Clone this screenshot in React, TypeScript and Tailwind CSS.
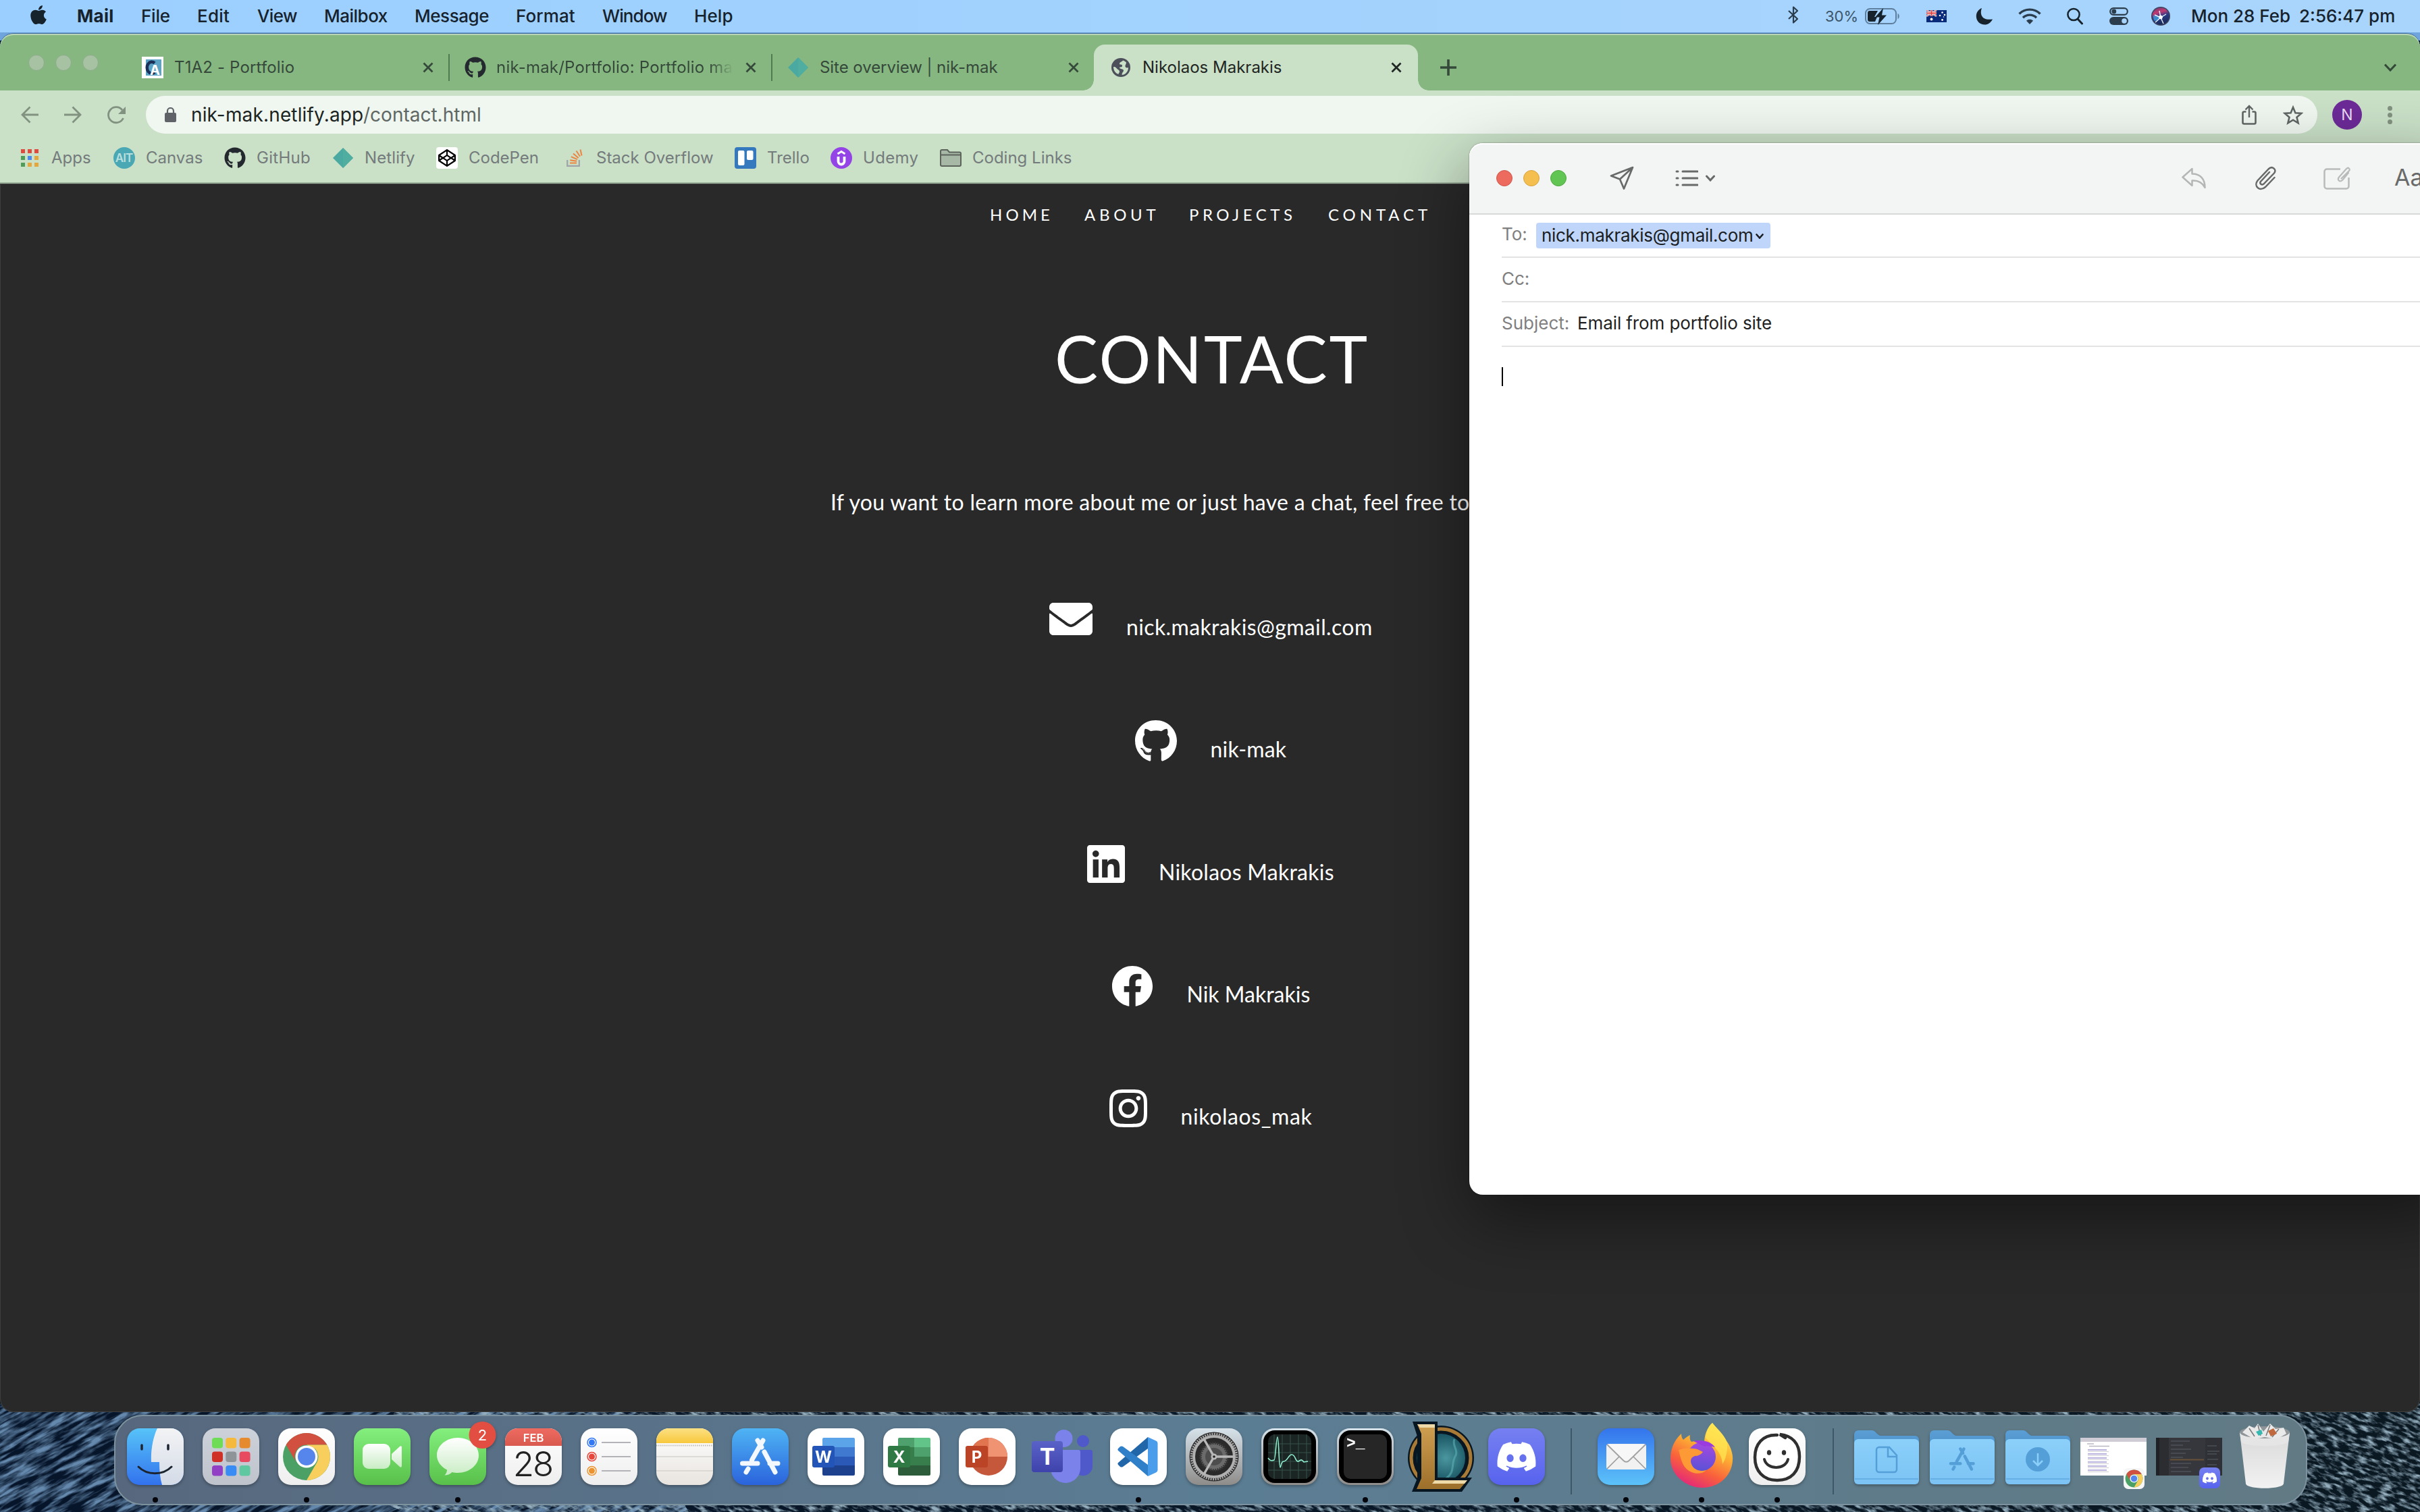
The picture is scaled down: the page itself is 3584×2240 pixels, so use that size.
import type { ReactNode } from "react";
import { FaApple, FaEnvelope, FaGithub, FaLinkedin, FaFacebook, FaInstagram, FaDiscord, FaCodepen } from "react-icons/fa";

/* ---------- Shared ---------- */

function Cross({ className }: { className: string }) {
  return (
    <svg viewBox="0 0 16 16" className={`h-4 w-4 shrink-0 ${className}`}>
      <path d="M1.500 1.500 14.500 14.500M14.500 1.500 1.500 14.500" stroke="currentColor" strokeWidth="2.800" fill="none" />
    </svg>
  );
}

/* ---------- Menu bar ---------- */

const menus = [
  { label: "Mail", cls: "w-[55px] font-bold tracking-[0.3px]" },
  { label: "File", cls: "w-[43px] font-medium tracking-[-0.2px]" },
  { label: "Edit", cls: "w-[49px] font-medium tracking-[0.2px]" },
  { label: "View", cls: "w-[59px] font-medium tracking-[-0.6px]" },
  { label: "Mailbox", cls: "w-[94px] font-medium tracking-[-0.5px]" },
  { label: "Message", cls: "w-[110px] font-medium tracking-[-0.45px]" },
  { label: "Format", cls: "w-[88px] font-medium tracking-[0.1px]" },
  { label: "Window", cls: "w-[96px] font-medium tracking-[-0.9px]" },
  { label: "Help", cls: "w-[58px] font-medium tracking-[0.1px]" },
];

function MenuBar() {
  return (
    <header className="flex h-12 shrink-0 items-center bg-linear-to-r from-[#9bcfff] to-[#a9d5fc] pr-9 pl-[42px] text-[26px] whitespace-nowrap text-[#16222c]">
      <FaApple className="-mt-1 mr-[42px] h-8 w-[30px] shrink-0" />
      <nav className="-mt-px flex gap-10">
        {menus.map((m) => (
          <span key={m.label} className={m.cls}>{m.label}</span>
        ))}
      </nav>
      <div className="ml-auto flex items-center text-[#2b3d4c]">
        <svg viewBox="0 0 18 28" className="-mt-1 h-7 w-[18px]">
          <path d="M2 8 15 20 9 25.500V2.500L15 8 2 20" fill="none" stroke="currentColor" strokeWidth="2.200" strokeLinejoin="round" />
        </svg>
        <span className="ml-[38px] w-[50px] text-[22px] text-[#3c5468]">30%</span>
        <svg viewBox="0 0 52 26" className="ml-[9px] h-[26px] w-[52px]">
          <rect x="1" y="2" width="45" height="22" rx="6.500" fill="none" stroke="#5d7f9d" strokeWidth="2" />
          <path d="M48.500 9v8c3-1 3-7 0-8z" fill="#5d7f9d" />
          <path d="M7 5h12l-5 9h4l-3 7H7a3 3 0 0 1-3-3V8a3 3 0 0 1 3-3z" fill="#16222c" />
          <path d="M27 1 15 14.500h6.500L19 26 32 11.500h-7z" fill="#16222c" />
        </svg>
        <svg viewBox="0 0 30 18" className="ml-[39px] h-[18px] w-[30px]">
          <rect width="30" height="18" fill="#0a2a7a" />
          <path d="M0 0 15 9M15 0 0 9" stroke="#fff" strokeWidth="2.400" />
          <path d="M0 0 15 9M15 0 0 9" stroke="#e0433f" strokeWidth="1" />
          <path d="M7.500 0v9M0 4.500h15" stroke="#fff" strokeWidth="3.400" />
          <path d="M7.500 0v9M0 4.500h15" stroke="#e0433f" strokeWidth="2" />
          <g fill="#fff">
            <circle cx="7.500" cy="13.500" r="1.900" />
            <circle cx="23.500" cy="3.500" r="1.300" />
            <circle cx="20" cy="8" r="1.300" />
            <circle cx="27" cy="7" r="1.300" />
            <circle cx="23.500" cy="14.500" r="1.400" />
            <circle cx="25.500" cy="10" r=".8" />
          </g>
        </svg>
        <svg viewBox="0 0 26 26" className="ml-[43px] h-[26px] w-[26px] text-[#16222c]">
          <path d="M9 1C6 9 8 20 25 17.500 22 23 18 25.500 13.500 25.500 6 25.500.8 20 .8 13 .8 7.500 4 3 9 1z" fill="currentColor" />
        </svg>
        <svg viewBox="0 0 34 26" className="ml-[37px] h-[26px] w-[34px]">
          <g fill="none" stroke="currentColor" strokeWidth="3.400">
            <path d="M1.500 9.500c8.500-8.500 22.500-8.500 31 0" />
            <path d="M7 15.200c5.500-5.500 14.500-5.500 20 0" />
          </g>
          <path d="M12 19.800c2.800-2.600 7.200-2.600 10 0L17 25z" fill="currentColor" />
        </svg>
        <svg viewBox="0 0 24 26" className="ml-[38px] h-[26px] w-6 text-[#16222c]">
          <circle cx="10" cy="10.500" r="8.600" fill="none" stroke="currentColor" strokeWidth="2.500" />
          <path d="m16 17 6.500 7" stroke="currentColor" strokeWidth="3" strokeLinecap="round" />
        </svg>
        <svg viewBox="0 0 28 28" className="ml-[39px] h-7 w-7">
          <rect x="1.200" y="2.200" width="25.600" height="9.600" rx="4.800" fill="none" stroke="currentColor" strokeWidth="2.200" />
          <circle cx="6.800" cy="7" r="3.400" fill="currentColor" />
          <rect y="15" width="28" height="12" rx="6" fill="currentColor" />
          <circle cx="22" cy="21" r="3.800" fill="#a8d4fc" />
        </svg>
        <svg viewBox="0 0 28 28" className="ml-[34px] h-7 w-7">
          <defs>
            <linearGradient id="siri" x1="0" y1="0" x2=".3" y2="1">
              <stop offset="0" stopColor="#6b3a70" />
              <stop offset=".35" stopColor="#c23a72" />
              <stop offset=".6" stopColor="#2c3a86" />
              <stop offset="1" stopColor="#1b2c5c" />
            </linearGradient>
          </defs>
          <circle cx="14" cy="14" r="14" fill="#3d4560" />
          <circle cx="14" cy="14" r="12.500" fill="url(#siri)" />
          <path d="M3 13c5 0 8 1 11 3-2 2-6 5-9 5-2-2-2-5-2-8z" fill="#3f9fe0" opacity=".8" />
          <path d="M14 16 6 23M14 16 12 6M14 16l8-5M14 16l4 9M14 16 5 12" stroke="#e8f6ff" strokeWidth="1.400" />
          <circle cx="14" cy="15.500" r="2.800" fill="#fff" />
        </svg>
        <span className="-mt-px ml-[31px] w-[147px] font-medium text-[#16222c]">Mon 28 Feb</span>
        <span className="-mt-px ml-[13px] w-[143px] font-medium text-[#16222c]">2:56:47 pm</span>
      </div>
    </header>
  );
}

/* ---------- Browser ---------- */

function Diamond() {
  return (
    <svg viewBox="0 0 30 30" className="h-[30px] w-[30px] shrink-0">
      <path d="M15 0 30 15 15 30 0 15z" fill="#4aa9a0" />
      <path d="M15 0 30 15 15 30z" fill="#4fae9f" />
    </svg>
  );
}

function TabStrip() {
  return (
    <div className="flex h-[84px] items-stretch rounded-t-[20px] bg-[#87b781] pt-4 text-2xl whitespace-nowrap text-[#35493a] shadow-[inset_0_2px_0_#b9d6b6]">
      <div className="flex w-[192px] items-center gap-4 pb-3.5 pl-[42px]">
        <i className="h-6 w-6 rounded-full border border-[#8cab89] bg-[#a6c2a3]" />
        <i className="h-6 w-6 rounded-full border border-[#8cab89] bg-[#a6c2a3]" />
        <i className="h-6 w-6 rounded-full border border-[#8cab89] bg-[#a6c2a3]" />
      </div>
      <div className="flex w-[472px] items-center pr-[22px] pl-[18px]">
        <svg viewBox="0 0 32 32" className="h-8 w-8 shrink-0">
          <rect width="32" height="32" fill="#fff" />
          <rect x="6" y="4" width="23" height="24" fill="#5ba3c4" />
          <path d="M19 9.500A7 8.500 0 1 0 19 23" fill="none" stroke="#1c2f57" strokeWidth="4.500" />
          <text x="12" y="27" fontSize="20" fontWeight="700" fill="#fff" fontFamily="Inter">A</text>
        </svg>
        <span className="ml-4 tracking-[0.15px]">T1A2 - Portfolio</span>
        <Cross className="ml-auto" />
      </div>
      <i className="my-auto h-10 w-0.5 bg-[#527a50]" />
      <div className="flex w-[476px] items-center pr-[22px] pl-[22px]">
        <FaGithub className="h-8 w-8 shrink-0 text-[#24292f]" />
        <span className="ml-[15px] w-[351px] overflow-hidden mask-r-from-90% tracking-[0.2px]">nik-mak/Portfolio: Portfolio made</span>
        <Cross className="ml-auto" />
      </div>
      <i className="my-auto h-10 w-0.5 bg-[#527a50]" />
      <div className="flex w-[476px] items-center pr-[22px] pl-[23px]">
        <Diamond />
        <span className="ml-[17px] tracking-[-0.05px]">Site overview | nik-mak</span>
        <Cross className="ml-auto" />
      </div>
      <div className="relative flex w-[480px] items-center rounded-t-2xl bg-[#cae0c7] pr-6 pl-[26px] text-[#1f2623]">
        <i className="absolute bottom-0 -left-4 h-4 w-4 bg-[radial-gradient(circle_at_0_0,transparent_15.5px,#cae0c7_16px)]" />
        <i className="absolute -right-4 bottom-0 h-4 w-4 bg-[radial-gradient(circle_at_100%_0,transparent_15.5px,#cae0c7_16px)]" />
        <svg viewBox="0 0 28 28" className="h-7 w-7 shrink-0">
          <circle cx="14" cy="14" r="14" fill="#4d4f5a" />
          <path d="M17 3.500c-1 2-5 2-5 5 0 2 4 0 4 3s-4 1-4 3c0 2 6 1 6 4 0 2-2 2-2.500 6.500C21 24.500 25 20 25 14c-2 1-4 .5-4.500-1.500S22 9 22 6.500c-1.500-1.500-3-2.500-5-3zM3 13c3-.5 4 1.500 5.500 3s3.500 2 3.500 4-1.500 2-1.500 4C6 22.500 3 18.500 3 13z" fill="#cae0c7" />
        </svg>
        <span className="ml-[18px]">Nikolaos Makrakis</span>
        <Cross className="ml-auto" />
      </div>
      <svg viewBox="0 0 26 26" className="my-auto ml-8 h-[26px] w-[26px]">
        <path d="M13 1v24M1 13h24" stroke="#35493a" strokeWidth="3.600" />
      </svg>
      <svg viewBox="0 0 18 12" className="my-auto mr-[35px] ml-auto h-3 w-[18px]">
        <path d="m1 1.500 8 8.500 8-8.500" fill="none" stroke="#35493a" strokeWidth="3" />
      </svg>
    </div>
  );
}

function Toolbar() {
  return (
    <div className="flex h-[72px] items-center pl-[31px] whitespace-nowrap">
      <svg viewBox="0 0 26 26" className="h-[26px] w-[26px] text-[#829280]">
        <path d="M13.500 1.500 2 13l11.500 11.500M2 13h24" fill="none" stroke="currentColor" strokeWidth="2.800" />
      </svg>
      <svg viewBox="0 0 26 26" className="ml-[38px] h-[26px] w-[26px] text-[#829280]">
        <path d="M12.500 1.500 24 13 12.500 24.500M24 13H0" fill="none" stroke="currentColor" strokeWidth="2.800" />
      </svg>
      <svg viewBox="0 0 27 27" className="ml-[38px] h-[27px] w-[27px] text-[#829280]">
        <path d="M23.500 18A11.500 11.500 0 1 1 22 6" fill="none" stroke="currentColor" strokeWidth="2.800" />
        <path d="M27 1v11H16z" fill="currentColor" />
      </svg>
      <div className="ml-[30px] flex h-14 w-[3216px] items-center rounded-full bg-[#f0f7f0] pr-[21px] pl-7 text-[28px] text-[#5f6764]">
        <svg viewBox="0 0 17 22" className="h-[22px] w-[17px]">
          <rect y="8" width="17" height="14" rx="2" fill="#5f6368" />
          <path d="M4 9V5.500a4.500 4.500 0 0 1 9 0V9" fill="none" stroke="#5f6368" strokeWidth="2.200" />
        </svg>
        <span className="ml-[22px] w-[255px] tracking-[0.15px] text-[#1c2422]">nik-mak.netlify.app</span>
        <span>/contact.html</span>
        <svg viewBox="0 0 22 30" className="ml-auto h-[30px] w-[22px]">
          <path d="M6.500 10.500H3.500a2 2 0 0 0-2 2v14a2 2 0 0 0 2 2h15a2 2 0 0 0 2-2v-14a2 2 0 0 0-2-2h-3" fill="none" stroke="currentColor" strokeWidth="2.600" />
          <path d="M11 19V3M5.500 7.500 11 2l5.500 5.500" fill="none" stroke="currentColor" strokeWidth="2.400" />
        </svg>
        <svg viewBox="0 0 30 29" className="ml-[39px] h-[29px] w-[30px]">
          <path d="m15 3 3.400 8.200 8.900.7-6.800 5.800 2.100 8.600L15 21.700l-7.600 4.600 2.100-8.600-6.800-5.800 8.900-.7z" fill="none" stroke="currentColor" strokeWidth="2.600" />
        </svg>
      </div>
      <span className="ml-[22px] grid h-11 w-11 place-items-center rounded-full bg-[#6c2a97] text-[23px] text-[#e9dcf2]">N</span>
      <div className="ml-[38px] flex flex-col gap-[3px]">
        <i className="h-[7px] w-[7px] rounded-full bg-[#829280]" />
        <i className="h-[7px] w-[7px] rounded-full bg-[#829280]" />
        <i className="h-[7px] w-[7px] rounded-full bg-[#829280]" />
      </div>
    </div>
  );
}

const appColors = ["#e24a3f", "#e24a3f", "#e24a3f", "#4f9d58", "#4a8af0", "#e5a63c", "#4f9d58", "#e5a63c", "#e5a63c"];

const bookmarks: { label: string; cls: string; icon: ReactNode }[] = [
  {
    label: "Apps",
    cls: "w-[62px]",
    icon: (
      <div className="grid grid-cols-3 gap-1">
        {appColors.map((c, i) => (
          <i key={i} className="h-[6px] w-[6px]" style={{ background: c }} />
        ))}
      </div>
    ),
  },
  {
    label: "Canvas",
    cls: "w-[86px]",
    icon: (
      <svg viewBox="0 0 32 32" className="h-8 w-8">
        <circle cx="16" cy="16" r="16" fill="#4aa7b4" />
        <text x="15.500" y="22" fontSize="17" fontWeight="600" textAnchor="middle" fill="#b9dfdf" fontFamily="Inter" letterSpacing="-1">AIT</text>
      </svg>
    ),
  },
  { label: "GitHub", cls: "w-[82px] tracking-[0.3px]", icon: <FaGithub className="h-8 w-8 text-[#24292f]" /> },
  { label: "Netlify", cls: "w-[76px] tracking-[0.1px]", icon: <Diamond /> },
  {
    label: "CodePen",
    cls: "w-[108px]",
    icon: (
      <span className="grid h-8 w-8 place-items-center rounded-sm bg-white">
        <FaCodepen className="h-[26px] w-[26px] text-black" />
      </span>
    ),
  },
  {
    label: "Stack Overflow",
    cls: "w-[175px]",
    icon: (
      <svg viewBox="0 0 24 26" className="h-[26px] w-6">
        <path d="M1.200 16v8.800h17.600V16" fill="none" stroke="#a0a3a8" strokeWidth="2.200" />
        <path d="M5 20.500h10M5.300 16.200l9.900 1.600M6.800 11.200l9.200 4M10 6.500l7.600 6.500M14.500 2.500l5.500 8.300M20.500.500l2 9" stroke="#ee8340" strokeWidth="2" />
      </svg>
    ),
  },
  {
    label: "Trello",
    cls: "w-[64px]",
    icon: (
      <svg viewBox="0 0 32 32" className="h-8 w-8">
        <rect width="32" height="32" rx="4" fill="#3478bd" />
        <rect x="5" y="5" width="9.500" height="22" rx="2" fill="#fff" />
        <rect x="18" y="5" width="9.500" height="14" rx="2" fill="#fff" />
      </svg>
    ),
  },
  {
    label: "Udemy",
    cls: "w-[84px] tracking-[0.3px]",
    icon: (
      <svg viewBox="0 0 32 32" className="h-8 w-8">
        <circle cx="16" cy="16" r="16" fill="#9343e6" />
        <path d="M11.500 14v7a4.500 4.500 0 0 0 9 0V14" fill="none" stroke="#fff" strokeWidth="3.800" />
        <path d="m10.500 10 5.500-3.500 5.500 3.500" fill="none" stroke="#fff" strokeWidth="2.800" />
      </svg>
    ),
  },
  {
    label: "Coding Links",
    cls: "w-[150px]",
    icon: (
      <svg viewBox="0 0 32 26" className="h-[26px] w-8">
        <path d="M1 23V3a2 2 0 0 1 2-2h8l3 3.500h15a2 2 0 0 1 2 2V23a2 2 0 0 1-2 2H3a2 2 0 0 1-2-2z" fill="#a8b8a7" stroke="#5b635b" strokeWidth="2" />
        <path d="M1 8.500h30" stroke="#5b635b" strokeWidth="2" />
      </svg>
    ),
  },
];

function Bookmarks() {
  return (
    <div className="flex h-[66px] gap-[30px] border-b-2 border-[#9db29b] pb-2 pl-7 text-2xl whitespace-nowrap text-[#747b7c]">
      {bookmarks.map((b) => (
        <div key={b.label} className="flex items-center">
          <span className={`mr-4 flex w-8 justify-center ${b.label === "Stack Overflow" ? "ml-[3px]" : ""}`}>{b.icon}</span>
          <span className={b.cls}>{b.label}</span>
        </div>
      ))}
    </div>
  );
}

const contacts = [
  { Icon: FaEnvelope, size: "w-16", label: "nick.makrakis@gmail.com", cls: "w-[362px] tracking-[0.37px]" },
  { Icon: FaGithub, size: "w-[62px]", label: "nik-mak", cls: "w-[111px] tracking-[0.2px]" },
  { Icon: FaLinkedin, size: "w-14", label: "Nikolaos Makrakis", cls: "w-[258px] tracking-[0.25px]" },
  { Icon: FaFacebook, size: "w-[62px]", label: "Nik Makrakis", cls: "w-[181px]" },
  { Icon: FaInstagram, size: "w-14", label: "nikolaos_mak", cls: "w-[193px] tracking-[0.6px]" },
];

function ContactPage() {
  return (
    <main className="flex h-[1820px] flex-col rounded-b-[20px] bg-[#292929] font-[Lato,sans-serif] whitespace-nowrap text-white shadow-[inset_0_0_0_1px_#3f3f3f]">
      <nav className="flex h-[92px] items-center pl-[1466px] text-2xl">
        <span className="w-[94px] tracking-[5.1px]">HOME</span>
        <span className="ml-[46px] w-[110px] tracking-[5.7px]">ABOUT</span>
        <span className="ml-[45px] w-[157px] tracking-[5.5px]">PROJECTS</span>
        <span className="ml-[49px] w-[150px] tracking-[5.9px]">CONTACT</span>
      </nav>
      <h1 className="mx-auto mt-[107px] h-[120px] w-[464px] pl-0.5 text-[96px] leading-[120px] tracking-[2.7px]">CONTACT</h1>
      <p className="mx-auto mt-[129px] h-12 w-[1124px] text-[32px] leading-[48px] tracking-[0.3px]">
        If you want to learn more about me or just have a chat, feel free to
      </p>
      <ul className="mt-[117px] flex flex-col gap-[117.25px] text-[32px] leading-10">
        {contacts.map(({ Icon, size, label, cls }) => (
          <li key={label} className="flex h-16 items-end justify-center gap-[50px]">
            <Icon className={`h-16 ${size}`} />
            <span className={cls}>{label}</span>
          </li>
        ))}
      </ul>
    </main>
  );
}

/* ---------- Mail compose window ---------- */

function MailWindow() {
  return (
    <section className="absolute top-[212px] left-[2176px] flex h-[1558px] w-[1460px] flex-col rounded-[20px] bg-white text-[26px] whitespace-nowrap text-[#7f7f7f] shadow-[0_0_2px_rgba(0,0,0,0.5),0_36px_100px_rgba(0,0,0,0.45)]">
      <div className="flex h-[106px] items-center rounded-t-[20px] border-b-2 border-[#d7d9d8] bg-[#f3f5f4] pl-10 text-[#686a69] shadow-[inset_0_2px_0_#fff]">
        <i className="h-6 w-6 rounded-full border border-[#d0564b] bg-[#ed6a5e]" />
        <i className="ml-4 h-6 w-6 rounded-full border border-[#d8a23f] bg-[#f5bf4f]" />
        <i className="ml-4 h-6 w-6 rounded-full border border-[#4fa73e] bg-[#61c554]" />
        <svg viewBox="0 0 36 36" className="ml-16 h-9 w-9">
          <path d="M34 2 2 14.500 15 19.500 21 33.500zM34 2 15 19.500" fill="none" stroke="currentColor" strokeWidth="2.700" strokeLinejoin="round" />
        </svg>
        <svg viewBox="0 0 34 26" className="ml-[61px] h-[26px] w-[34px]">
          <path d="M11 3h22M11 13h22M11 23h22M2 3h2M2 13h2M2 23h2" stroke="currentColor" strokeWidth="3" strokeLinecap="round" />
        </svg>
        <svg viewBox="0 0 14 10" className="ml-[11px] h-2.5 w-3.5">
          <path d="m1.500 2 5.500 6 5.500-6" fill="none" stroke="currentColor" strokeWidth="3" strokeLinecap="round" />
        </svg>
        <svg viewBox="0 0 36 32" className="ml-[691px] h-8 w-9 text-[#b4b6b5]">
          <path d="M15.500 2 1.500 14.500 15.500 27v-7.500c9-.5 15 2.500 19 10.500 0-13-7-20.500-19-20.500z" fill="none" stroke="currentColor" strokeWidth="2.500" strokeLinejoin="round" />
        </svg>
        <svg viewBox="0 0 32 36" className="ml-[72px] h-9 w-8">
          <path d="M29.500 17 16 31c-8 7.500-18-1-11.500-9.500L20.500 4.500c5.500-5.500 13 .5 8.500 6L13.500 26.500c-3 2.500-6.500-.5-4.500-3.500L22 9" fill="none" stroke="currentColor" strokeWidth="2.500" strokeLinecap="round" />
        </svg>
        <svg viewBox="0 0 40 34" className="ml-[70px] h-[34px] w-10 text-[#b9bbba]">
          <path d="M25 3.500H5a3.500 3.500 0 0 0-3.500 3.500v22A3.500 3.500 0 0 0 5 32.500h29a3.500 3.500 0 0 0 3.500-3.500V16" fill="none" stroke="currentColor" strokeWidth="2.500" />
          <path d="M37 9 28 20c-4 3.500-8-.5-5-4.500L34 3c3-3 6 .5 4 3L26.500 17.500" fill="none" stroke="currentColor" strokeWidth="2.200" strokeLinecap="round" />
        </svg>
        <span className="-mt-1 ml-[65px] text-[34px]">Aa</span>
      </div>
      <div className="ml-12 flex h-16 items-center border-b-2 border-[#e3e3e3]">
        <span className="-mt-1.5 w-[38px]">To:</span>
        <span className="ml-[13px] flex h-[38px] w-[347px] items-center rounded bg-[#bfd6fa] pb-0.5 pl-2 text-[#1a1d22]">
          <span className="w-[313px] tracking-[-0.3px]">nick.makrakis@gmail.com</span>
          <svg viewBox="0 0 12 8" className="mt-1 ml-1 h-2 w-3">
            <path d="m1.500 1.500 4.500 5 4.500-5" fill="none" stroke="currentColor" strokeWidth="2.600" strokeLinecap="round" />
          </svg>
        </span>
      </div>
      <div className="ml-12 flex h-[66px] items-center border-b-2 border-[#e3e3e3] pb-1">
        <span>Cc:</span>
      </div>
      <div className="ml-12 flex h-[66px] items-center border-b-2 border-[#e3e3e3] pb-1">
        <span className="w-[102px]">Subject:</span>
        <span className="ml-[10px] tracking-[-0.1px] text-[#1f1f1f]">Email from portfolio site</span>
      </div>
      <i className="mt-[30px] ml-12 h-7 w-0.5 bg-black" />
    </section>
  );
}

/* ---------- Dock ---------- */

function Tile({ fill, children }: { fill: string; children?: ReactNode }) {
  return (
    <svg viewBox="0 0 84 84" className="h-[84px] w-[84px] overflow-visible drop-shadow-[0_2px_2px_rgba(0,0,0,0.3)]">
      <rect width="84" height="84" rx="19" fill={fill} />
      {children}
    </svg>
  );
}

function Grad({ id, from, to }: { id: string; from: string; to: string }) {
  return (
    <linearGradient id={id} x1="0" y1="0" x2="0" y2="1">
      <stop offset="0" stopColor={from} />
      <stop offset="1" stopColor={to} />
    </linearGradient>
  );
}

function DockDefs() {
  return (
    <svg className="absolute h-0 w-0">
      <defs>
        <Grad id="finder" from="#57c3f8" to="#3272ee" />
        <Grad id="finderFace" from="#f3f3f5" to="#d3dbe7" />
        <Grad id="launch" from="#cdd2da" to="#bfc3cb" />
        <Grad id="white" from="#ffffff" to="#eeeeee" />
        <Grad id="green" from="#84ef7e" to="#58c04a" />
        <Grad id="bubble" from="#ffffff" to="#c9ecc4" />
        <Grad id="calTop" from="#ee6a60" to="#d95a50" />
        <Grad id="noteTop" from="#fbe083" to="#f8c83c" />
        <Grad id="notes" from="#ffffff" to="#e8e4df" />
        <Grad id="store" from="#4fb4f4" to="#2a63dc" />
        <Grad id="metal" from="#d6e2ea" to="#8e8c8a" />
        <Grad id="discord" from="#7680f1" to="#5763ee" />
        <Grad id="mail" from="#3474ec" to="#5cc3f9" />
        <Grad id="folder" from="#8bd0fa" to="#7cc3f4" />
        <Grad id="folderBack" from="#5a9ed4" to="#3f82c4" />
        <Grad id="teams" from="#5a62c8" to="#3e43ab" />
        <Grad id="gold" from="#d0a052" to="#9c6f2a" />
        <Grad id="trash" from="#d9d9d9" to="#f2f2f2" />
        <linearGradient id="fire" x1=".8" y1="0" x2=".3" y2="1">
          <stop offset="0" stopColor="#fff05a" />
          <stop offset=".4" stopColor="#fdae33" />
          <stop offset=".7" stopColor="#f9603c" />
          <stop offset="1" stopColor="#e3267c" />
        </linearGradient>
        <linearGradient id="globe" x1=".5" y1="0" x2=".4" y2="1">
          <stop offset="0" stopColor="#a548e0" />
          <stop offset="1" stopColor="#5a52d6" />
        </linearGradient>
        <radialGradient id="portal" cx=".6" cy=".5" r=".6">
          <stop offset="0" stopColor="#4a97a0" />
          <stop offset="1" stopColor="#0f4656" />
        </radialGradient>
      </defs>
    </svg>
  );
}

function ChromeMark() {
  return (
    <g>
      <circle cx="42" cy="42" r="35" fill="#4aa065" />
      <path d="M42 7a35 35 0 0 1 30.300 17.500H42a17.500 17.500 0 0 0-15.200 26.200L11.700 24.500A35 35 0 0 1 42 7z" fill="#d2503f" />
      <path d="M72.300 24.500A35 35 0 0 1 42 77l15.200-26.200a17.500 17.500 0 0 0-2-20L42 24.500z" fill="#f8cf5c" />
      <circle cx="42" cy="42" r="16.500" fill="#fff" />
      <circle cx="42" cy="42" r="13" fill="#5686ec" />
    </g>
  );
}

function AppStoreMark({ color, w }: { color: string; w: number }) {
  return (
    <g stroke={color} strokeWidth={w} strokeLinecap="round">
      <path d="M46 18 29.500 47M38 18l6 10M48 35l16 30M15.500 52H38M56 52h12M24 60l-3 5" />
    </g>
  );
}

const launchColors = ["#6fdc58", "#f5b93d", "#e68a2e", "#cf3127", "#8e9498", "#e84a60", "#9240c4", "#3a8cf5", "#5fc8a0"];

function OfficeLetter({ letter, fill }: { letter: string; fill: string }) {
  return (
    <g>
      <rect x="7" y="26" width="33" height="32" rx="3" fill={fill} />
      <text x="23.500" y="51" fontSize="24" fontWeight="700" textAnchor="middle" fill="#fff" fontFamily="Inter">{letter}</text>
    </g>
  );
}

const apps: { name: string; running?: boolean; icon: ReactNode }[] = [
  {
    name: "finder",
    running: true,
    icon: (
      <Tile fill="url(#finder)">
        <path d="M45 0h20a19 19 0 0 1 19 19v46a19 19 0 0 1-19 19H52c-3-10-4-22-4-34H36C35 32 39 12 45 0z" fill="url(#finderFace)" />
        <path d="M22 25v6M61 25v6" stroke="#1c2430" strokeWidth="3.500" strokeLinecap="round" />
        <path d="M17 57c13 13 36 13 49 0" fill="none" stroke="#1c2430" strokeWidth="3" strokeLinecap="round" />
      </Tile>
    ),
  },
  {
    name: "launchpad",
    icon: (
      <Tile fill="url(#launch)">
        {launchColors.map((c, i) => (
          <rect key={c} x={14 + (i % 3) * 20.3} y={14 + Math.floor(i / 3) * 20.5} width="16" height="15.500" rx="4" fill={c} />
        ))}
      </Tile>
    ),
  },
  { name: "chrome", running: true, icon: <Tile fill="url(#white)"><ChromeMark /></Tile> },
  {
    name: "facetime",
    icon: (
      <Tile fill="url(#green)">
        <rect x="13" y="23" width="41" height="37" rx="9" fill="url(#bubble)" />
        <path d="M56 38l12-11c1.500-1.300 3-.5 3 1.500v27c0 2-1.500 2.800-3 1.500L56 46z" fill="url(#bubble)" />
      </Tile>
    ),
  },
  {
    name: "messages",
    running: true,
    icon: (
      <Tile fill="url(#green)">
        <path d="M42 14c17 0 31 11.500 31 26S59 66 42 66c-3 0-6-.3-8.500-1-3 3-7 4.500-11 4.500 2-2 3.500-5 3.500-8C17 57 11 49 11 40c0-14.500 14-26 31-26z" fill="url(#bubble)" />
        <circle cx="78.500" cy="10" r="20" fill="#e24f42" />
        <text x="78.500" y="18" fontSize="22" textAnchor="middle" fill="#fff" fontFamily="Inter">2</text>
      </Tile>
    ),
  },
  {
    name: "calendar",
    icon: (
      <Tile fill="url(#white)">
        <path d="M0 26v-7A19 19 0 0 1 19 0h46a19 19 0 0 1 19 19v7z" fill="url(#calTop)" />
        <text x="42" y="20" fontSize="16.500" fontWeight="600" textAnchor="middle" fill="#fff" fontFamily="Inter">FEB</text>
        <text x="41" y="71" fontSize="51" fontWeight="300" textAnchor="middle" fill="#222" fontFamily="Inter" letterSpacing="-2">28</text>
      </Tile>
    ),
  },
  {
    name: "reminders",
    icon: (
      <Tile fill="url(#white)">
        {["#3478f6", "#e8463a", "#ec9330"].map((c, i) => (
          <g key={c}>
            <circle cx="16.500" cy={21 + i * 21} r="6.500" fill="#fff" stroke={c} strokeWidth="1.500" />
            <circle cx="16.500" cy={21 + i * 21} r="4.500" fill={c} />
            <path d={`M31 ${21 + i * 21}h43`} stroke="#b4b4b8" strokeWidth="2" />
          </g>
        ))}
      </Tile>
    ),
  },
  {
    name: "notes",
    icon: (
      <Tile fill="url(#notes)">
        <path d="M0 22v-3A19 19 0 0 1 19 0h46a19 19 0 0 1 19 19v3z" fill="url(#noteTop)" />
        <path d="M0 25.500h84" stroke="#bfbbb2" strokeWidth="2" strokeDasharray="1.500 1.500" />
        <path d="M0 42h84M0 63h84" stroke="#d6d4d0" strokeWidth="1.600" />
      </Tile>
    ),
  },
  { name: "appstore", icon: <Tile fill="url(#store)"><AppStoreMark color="#f3f8ff" w={7} /></Tile> },
  {
    name: "word",
    icon: (
      <Tile fill="#fff">
        <path d="M22 28V16a2 2 0 0 1 2-2h44a2 2 0 0 1 2 2v12z" fill="#5ba4ea" />
        <path d="M22 28h48v14H22z" fill="#3f79d0" />
        <path d="M22 42h48v13H22z" fill="#2a59b8" />
        <path d="M22 55h48v13a2 2 0 0 1-2 2H24a2 2 0 0 1-2-2z" fill="#1d418c" />
        <OfficeLetter letter="W" fill="#2355b8" />
      </Tile>
    ),
  },
  {
    name: "excel",
    icon: (
      <Tile fill="#fff">
        <path d="M22 28V16a2 2 0 0 1 2-2h22v14z" fill="#4ea06c" />
        <path d="M46 14h22a2 2 0 0 1 2 2v12H46z" fill="#63c48a" />
        <path d="M22 28h24v14H22z" fill="#387d4c" />
        <path d="M46 28h24v14H46z" fill="#4ea06c" />
        <path d="M22 42h48v13H22z" fill="#387d4c" />
        <path d="M22 55h48v13a2 2 0 0 1-2 2H24a2 2 0 0 1-2-2z" fill="#2c5c3a" />
        <OfficeLetter letter="X" fill="#2f7a44" />
      </Tile>
    ),
  },
  {
    name: "powerpoint",
    icon: (
      <Tile fill="#fff">
        <circle cx="44" cy="42" r="28" fill="#c5583a" />
        <path d="M44 42V14a28 28 0 0 0-28 28z" fill="#e07550" />
        <path d="M44 42V14a28 28 0 0 1 28 28z" fill="#f09373" />
        <g transform="translate(3 0)"><OfficeLetter letter="P" fill="#bb4427" /></g>
      </Tile>
    ),
  },
  {
    name: "teams",
    icon: (
      <svg viewBox="0 0 84 84" className="h-[84px] w-[84px] overflow-visible">
        <circle cx="72" cy="19" r="9" fill="#5059c9" />
        <path d="M62 32h21a3 3 0 0 1 3 3v21a14 14 0 0 1-20 13z" fill="#5059c9" />
        <circle cx="43.500" cy="15" r="13" fill="#7b83eb" />
        <path d="M24 32h41a3 3 0 0 1 3 3v24a22 22 0 0 1-44 0z" fill="#7b83eb" />
        <rect x="-4" y="19" width="46" height="46" rx="4" fill="url(#teams)" />
        <text x="19" y="54" fontSize="34" fontWeight="700" textAnchor="middle" fill="#fff" fontFamily="Inter">T</text>
      </svg>
    ),
  },
  {
    name: "vscode",
    running: true,
    icon: (
      <Tile fill="#fff">
        <path d="M12 51 56 13v17L19 57q-2 1-4 0l-3-3q-1.500-1.500 0-3z" fill="#2166a8" />
        <path d="M12 33 56 71V54L19 27q-2-1-4 0l-3 3q-1.500 1.500 0 3z" fill="#2f7fc9" />
        <path d="M56 13l12 5.500a4 4 0 0 1 2.500 3.500v40a4 4 0 0 1-2.500 3.500L56 71z" fill="#4a9deb" />
      </Tile>
    ),
  },
  {
    name: "settings",
    icon: (
      <Tile fill="url(#metal)">
        <circle cx="42" cy="42" r="36.500" fill="#2a2a2a" />
        <circle cx="42" cy="42" r="30" fill="none" stroke="#b0b0b0" strokeWidth="4" />
        <circle cx="42" cy="42" r="33.500" fill="none" stroke="#a8a8a8" strokeWidth="3.500" strokeDasharray="2 1.500" />
        <circle cx="42" cy="42" r="20" fill="#6b6b6b" stroke="#3a3a3a" strokeWidth="4" strokeDasharray="2 1.500" />
        <circle cx="42" cy="42" r="13" fill="#4d4d4d" />
        <path d="M42 42h30M42 42 27 16M42 42 27 68" stroke="#b9b9b9" strokeWidth="3.500" />
        <circle cx="42" cy="42" r="4.500" fill="#b9b9b9" />
        <circle cx="42" cy="42" r="1.800" fill="#222" />
      </Tile>
    ),
  },
  {
    name: "activity",
    icon: (
      <Tile fill="url(#metal)">
        <rect x="3" y="3" width="78" height="78" rx="17" fill="#000" />
        <rect x="10" y="9" width="64" height="66" rx="10" fill="#1b2523" />
        <path d="M10 23h64M10 36h64M10 49h64M10 62h64M19 9v66M31 9v66M43 9v66M55 9v66M67 9v66" stroke="#36524b" strokeWidth="1" />
        <path d="M10 44c3 5 6 4 9 3 2 0 3-34 5-34s2 45 4 45c1 0 1-9 5-9 6 0 7-10 12-10 6 0 5 11 10 10 4-3 5-3 8 1l6-1" fill="none" stroke="#8ff0d0" strokeWidth="1.600" />
      </Tile>
    ),
  },
  {
    name: "terminal",
    running: true,
    icon: (
      <Tile fill="url(#metal)">
        <rect x="3" y="3" width="78" height="78" rx="17" fill="#000" />
        <rect x="10" y="9" width="64" height="66" rx="10" fill="#262626" />
        <text x="14" y="29" fontSize="23" fontWeight="700" fill="#fff" fontFamily="Liberation Mono">&gt;_</text>
      </Tile>
    ),
  },
  {
    name: "league",
    icon: (
      <svg viewBox="0 0 84 84" className="h-[84px] w-[84px] overflow-visible">
        <ellipse cx="42" cy="44" rx="49" ry="48" fill="#071620" />
        <ellipse cx="42" cy="44" rx="44" ry="43" fill="none" stroke="#a87a35" strokeWidth="5" />
        <ellipse cx="42" cy="44" rx="36" ry="36" fill="url(#portal)" />
        <path d="M50 74c14-10 6-22 14-34 4-8-6-14-2-24" fill="none" stroke="#5cb0b4" strokeWidth="3" opacity=".6" />
        <path d="M0-10h37v83h51L73 94H-1l8-20V12z" fill="#071620" />
        <path d="M7-6h26v83h48L70 90H6l7-16V8z" fill="url(#gold)" />
        <path d="M7-6h26v5H11zM33 77h48l-4 5H29z" fill="#eed9a8" />
      </svg>
    ),
  },
  {
    name: "discord",
    running: true,
    icon: (
      <Tile fill="url(#discord)">
        <FaDiscord x={11} y={11} size={62} color="#fff" />
      </Tile>
    ),
  },
];

const recents: { name: string; icon: ReactNode }[] = [
  {
    name: "mail",
    icon: (
      <Tile fill="url(#mail)">
        <rect x="13" y="23" width="59" height="38" rx="4" fill="#f1f1f1" />
        <path d="M14 60 33 41M71 60 52 41" stroke="#9a9a9a" strokeWidth="1.600" />
        <path d="M14 24 38 47.500q4.500 4.500 9 0L71 24" fill="#f7f7f7" stroke="#a2a2a2" strokeWidth="1.800" />
      </Tile>
    ),
  },
  {
    name: "firefox",
    icon: (
      <svg viewBox="0 0 84 84" className="h-[84px] w-[84px] overflow-visible">
        <path d="M58-8c6 8 16 16 21 27 5 6 10 18 9 28-1 24-21 41-45 41S-4 69-4 45c0-14 5-27 16-37 0 4 1 7 3 9 3-3 6-5 10-7-1 4 0 8 2 10 7-2 12-1 19 2 0-12 4-23 12-30z" fill="url(#fire)" />
        <path d="M58-8c6 8 16 16 21 27 3 6 0 26-6 34C72 34 58 26 48 14c1-9 4-17 10-22z" fill="#ffe552" opacity=".75" />
        <circle cx="42" cy="42" r="21" fill="url(#globe)" />
        <path d="M30 19c12-3 26 0 32 9-8-2-14-2-16-1z" fill="#9a3be0" />
        <path d="M8 32c8-3 15-3 22-2 5 0 10 3 14 5-3 4-7 6-12 6-6 2-7 7-5 12 3 8 12 12 22 9-9 9-27 5-34-8-4-8-5-15-7-22z" fill="#fd9a36" />
      </svg>
    ),
  },
  {
    name: "balsamiq",
    icon: (
      <Tile fill="url(#white)">
        <path d="M42 10C20 9 9 24 9 43c0 20 12 34 33 34s33-13 33-35C75 22 64 11 46 9l8 5" fill="#fff" stroke="#2f2f2f" strokeWidth="4.500" strokeLinecap="round" />
        <ellipse cx="30" cy="36" rx="3.200" ry="3.800" fill="#2f2f2f" />
        <ellipse cx="52" cy="36" rx="3.200" ry="3.800" fill="#2f2f2f" />
        <path d="M23 46c4 16 31 16 35 0" fill="none" stroke="#2f2f2f" strokeWidth="4" strokeLinecap="round" />
      </Tile>
    ),
  },
];

function Folder({ children }: { children: ReactNode }) {
  return (
    <svg viewBox="0 0 96 84" className="h-[84px] w-24 drop-shadow-[0_2px_2px_rgba(0,0,0,0.3)]">
      <path d="M0 70V9a6 6 0 0 1 6-6h20c6 0 8 8 14 8h50a6 6 0 0 1 6 6v53z" fill="url(#folderBack)" />
      <rect y="16" width="96" height="67" rx="6" fill="url(#folder)" />
      <path d="M1 75h94" stroke="#5fa9df" strokeWidth="1.500" />
      {children}
    </svg>
  );
}

function Running() {
  return <i className="absolute top-[102px] left-1/2 h-2 w-2 -translate-x-1/2 rounded-full bg-[#04060c]" />;
}

const searchRows = [18, 24, 30, 36, 42, 48];

function Dock() {
  return (
    <div className="mx-auto mt-1 flex h-[134px] w-[3248px] translate-x-px items-start rounded-[42px] border-2 border-[#7d929f] bg-linear-to-r from-[#57687e] via-[#5b7d94] to-[#617a84] pt-[18px] pl-[17px]">
      <DockDefs />
      <div className="flex gap-7">
        {apps.map((a) => (
          <div key={a.name} className="relative">
            {a.icon}
            {a.running && <Running />}
          </div>
        ))}
      </div>
      <i className="ml-[38px] h-[98px] w-0.5 bg-[#3d5668]" />
      <div className="ml-[38px] flex gap-7">
        {recents.map((a) => (
          <div key={a.name} className="relative">
            {a.icon}
            <Running />
          </div>
        ))}
      </div>
      <i className="ml-10 h-[98px] w-0.5 bg-[#3d5668]" />
      <div className="ml-[30px] flex gap-4">
        <Folder>
          <path d="M36 28h16l11 12v21a4 4 0 0 1-4 4H37a4 4 0 0 1-4-4V32a4 4 0 0 1 4-4zM50 28v14h13" fill="none" stroke="#559fd8" strokeWidth="2.500" />
        </Folder>
        <Folder>
          <g transform="translate(21 19) scale(.64)"><AppStoreMark color="#559fd8" w={7} /></g>
        </Folder>
        <Folder>
          <circle cx="48" cy="46" r="18" fill="#559fd8" />
          <path d="M48 37v17M41 48l7 7 7-7" fill="none" stroke="#8bd0fa" strokeWidth="2.500" />
        </Folder>
      </div>
      <svg viewBox="0 0 98 76" className="mt-3.5 ml-[15px] h-[76px] w-[98px]">
        <rect width="98" height="56" fill="#fff" />
        <rect width="98" height="6" fill="#cfccd6" />
        <path d="M10 9h10M13 12.500h30" stroke="#b9b9c4" strokeWidth="1.500" />
        {searchRows.map((y) => (
          <g key={y}>
            <path d={`M11 ${y}h28`} stroke="#9c93cf" strokeWidth="1.400" />
            <path d={`M11 ${y + 2.5}h31`} stroke="#d2d2d8" strokeWidth="1.200" />
          </g>
        ))}
        <rect x="64" y="45" width="31" height="31" rx="7" fill="#f6f6f6" />
        <g transform="translate(64 45) scale(.369)"><ChromeMark /></g>
      </svg>
      <svg viewBox="0 0 98 76" className="mt-3.5 ml-3.5 h-[76px] w-[98px]">
        <rect width="98" height="56" fill="#35373c" />
        <rect width="5" height="56" fill="#1f2124" />
        <rect x="5" width="14" height="56" fill="#2b2d31" />
        <rect x="73" width="25" height="56" fill="#2f3136" />
        <path d="M22 5h28M22 11h18M22 17h30M22 23h22M22 29h18M22 38h30M22 44h26M22 50h30M76 12h14M76 20h18M76 24h14M76 32h16M76 40h14" stroke="#5c5f67" strokeWidth="1.200" />
        <path d="M21 32.500h50" stroke="#6a5238" strokeWidth="2" />
        <rect x="64" y="44" width="31" height="31" rx="7" fill="url(#discord)" />
        <FaDiscord x={68} y={48} size={23} color="#fff" />
      </svg>
      <svg viewBox="0 0 74 98" className="-mt-2 ml-[26px] h-[98px] w-[74px]">
        <path d="M0 14h74L65 90c-1 9-55 9-56 0z" fill="url(#trash)" />
        <ellipse cx="37" cy="14" rx="37" ry="9" fill="#8f9498" />
        <path d="M4 14 14 4l8 4 5-7 8 12 10-12 8 8 12-2 4 9-14 8-18-3-16 3z" fill="#e9e9e9" />
        <path d="M14 8l8 12M27 3l4 16M45 3l-6 16M58 9 48 21" stroke="#777" strokeWidth="1.500" />
        <path d="M24 13l8-3 2 6-6 3z" fill="#35b8b0" />
        <path d="M42 12l8-4 5 8-9 4z" fill="#c0693f" />
        <path d="M0 14c2 12 72 12 74 0L72 28c-6 8-64 8-70 0z" fill="#e6e6e6" opacity=".85" />
      </svg>
    </div>
  );
}

function Wallpaper() {
  return (
    <svg className="absolute inset-0 h-full w-full">
      <defs>
        <linearGradient id="sea" x1="0" x2="1" y1="0" y2="0">
          <stop offset="0" stopColor="#06152a" />
          <stop offset="1" stopColor="#0a1822" />
        </linearGradient>
        <filter id="swell" x="0" y="0" width="100%" height="100%">
          <feTurbulence type="fractalNoise" baseFrequency="0.025 0.16" numOctaves="4" seed="4" />
          <feColorMatrix values="0 0 0 0 .13  0 0 0 0 .25  0 0 0 0 .42  2.800 0 0 0 -1" />
        </filter>
        <filter id="chop" x="0" y="0" width="100%" height="100%">
          <feTurbulence type="fractalNoise" baseFrequency="0.06 0.2" numOctaves="4" seed="9" />
          <feColorMatrix values="0 0 0 0 .3  0 0 0 0 .43  0 0 0 0 .52  3 0 0 0 -1.300" />
        </filter>
      </defs>
      <rect width="3584" height="60" fill="#6fa5dc" />
      <rect y="2000" width="3584" height="240" fill="url(#sea)" />
      <g transform="rotate(-28 0 2240)">
        <rect x="-200" y="1900" width="1100" height="900" filter="url(#swell)" />
      </g>
      <g transform="rotate(24 2240 2160)">
        <rect x="700" y="1400" width="3000" height="1500" filter="url(#chop)" />
      </g>
    </svg>
  );
}

export default function App() {
  return (
    <div className="relative flex h-[2240px] w-[3584px] flex-col overflow-hidden bg-[#0b1c2e] font-[Inter,sans-serif]">
      <Wallpaper />
      <div className="relative flex flex-col">
        <MenuBar />
        <div className="mt-0.5 rounded-[20px] shadow-[0_-1px_1px_rgba(30,60,110,0.6)]">
          <TabStrip />
          <div className="bg-[#cae0c7]">
            <Toolbar />
            <Bookmarks />
          </div>
          <ContactPage />
        </div>
        <Dock />
      </div>
      <MailWindow />
    </div>
  );
}
